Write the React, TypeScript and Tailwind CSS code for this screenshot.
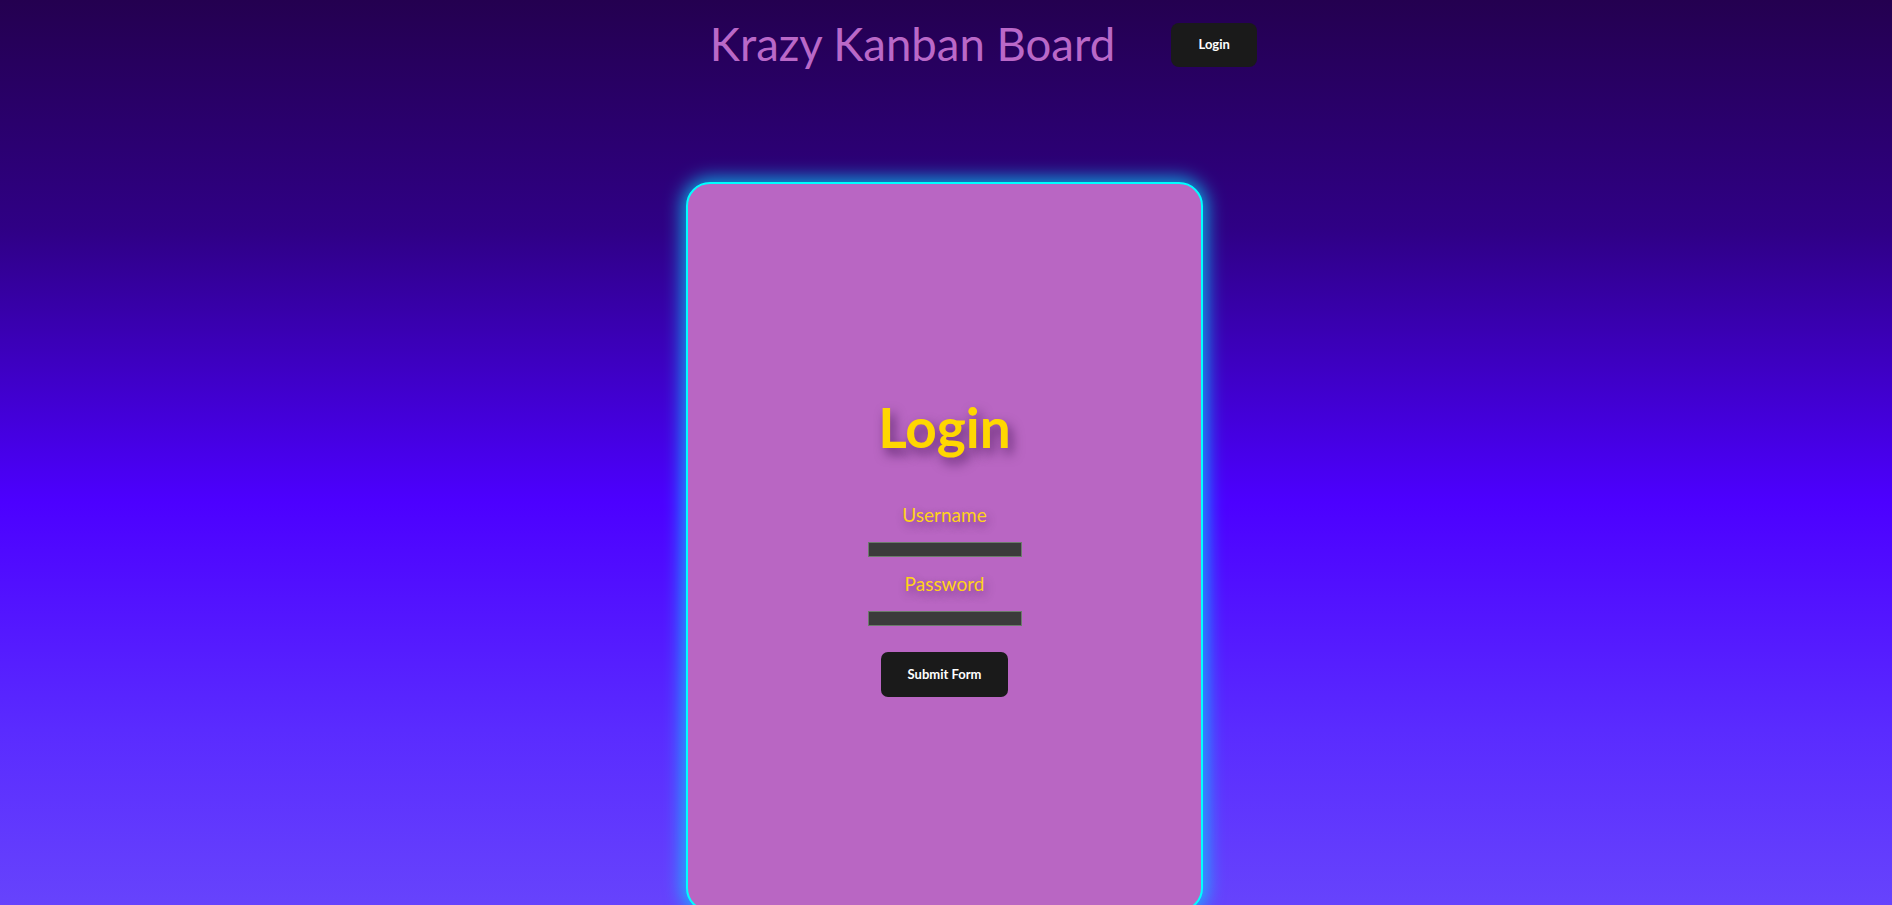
import React from "react";

export default function App() {
  return (
    <div className="min-h-[905px] w-full overflow-hidden bg-[linear-gradient(to_bottom,#240050_0%,#2f0085_25%,#4c00ff_55%,#5a2bff_80%,#6744fc_100%)] font-['Lato','Noto_Sans',sans-serif]">
      <header className="flex h-[89px] items-center justify-center gap-[56px] pl-[75px]">
        <h1 className="text-[45.5px] leading-[1.1] font-normal text-[#ba68c8]">Krazy Kanban Board</h1>
        <button className="flex h-[44px] w-[86px] items-center justify-center rounded-lg bg-[#1a1a1a] text-[13px] font-bold text-white">
          Login
        </button>
      </header>
      <main className="mt-[93px] flex justify-center pr-[3px]">
        <div className="flex h-[730px] w-[517px] flex-col items-center justify-center rounded-[24px] border-2 border-[#00ffff] bg-[#b966c3] shadow-[0_0_18px_4px_rgba(0,220,255,0.75)]">
          <h2 className="text-[55px] leading-[1.1] font-bold text-[#ffd700] [text-shadow:4px_6px_12px_rgba(40,0,60,0.6)]">
            Login
          </h2>
          <label className="mt-[42px] text-[19px] leading-[30px] text-[#ffd21a] [text-shadow:2px_4px_10px_rgba(60,0,80,0.45)]">
            Username
          </label>
          <input type="text" className="mt-[12px] h-[15px] w-[154px] border border-[#6b7b6b] bg-[#3b3b3b] outline-none" />
          <label className="mt-[12px] text-[19px] leading-[30px] text-[#ffd21a] [text-shadow:2px_4px_10px_rgba(60,0,80,0.45)]">
            Password
          </label>
          <input type="password" className="mt-[12px] h-[15px] w-[154px] border border-[#6b7b6b] bg-[#3b3b3b] outline-none" />
          <button className="mt-[26px] flex h-[45px] w-[127px] items-center justify-center rounded-[7px] bg-[#1a1a1a] text-[13px] font-bold text-white">
            Submit Form
          </button>
        </div>
      </main>
    </div>
  );
}
